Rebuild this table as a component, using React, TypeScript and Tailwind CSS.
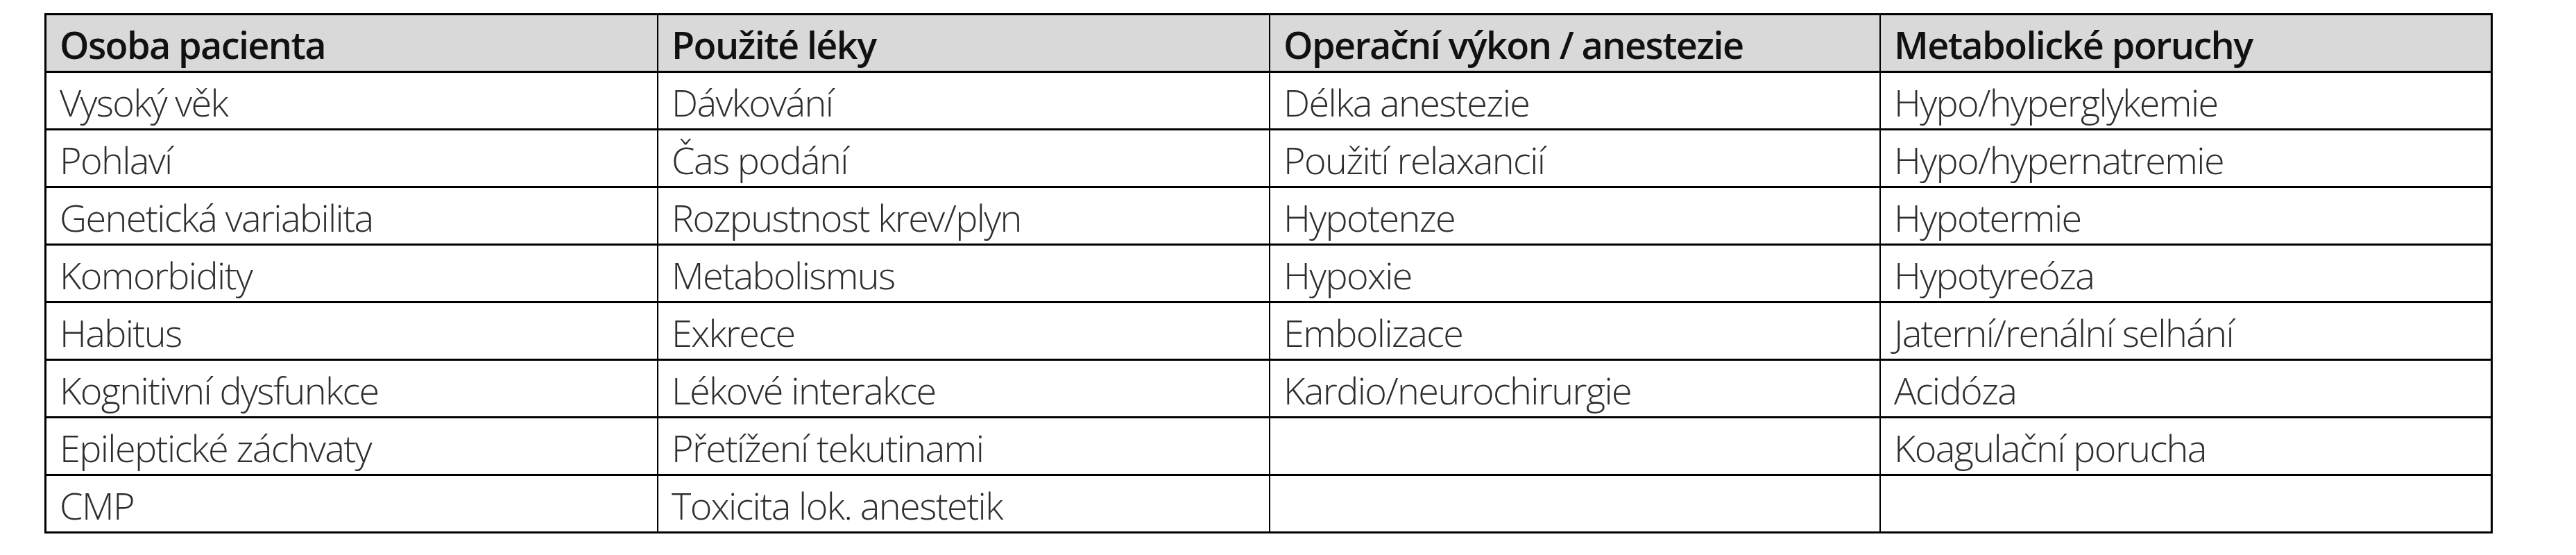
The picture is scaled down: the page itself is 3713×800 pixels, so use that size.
import React from "react";

const header = ["Osoba pacienta", "Použité léky", "Operační výkon / anestezie", "Metabolické poruchy"];

const rows: string[][] = [
  ["Vysoký věk", "Dávkování", "Délka anestezie", "Hypo/hyperglykemie"],
  ["Pohlaví", "Čas podání", "Použití relaxancií", "Hypo/hypernatremie"],
  ["Genetická variabilita", "Rozpustnost krev/plyn", "Hypotenze", "Hypotermie"],
  ["Komorbidity", "Metabolismus", "Hypoxie", "Hypotyreóza"],
  ["Habitus", "Exkrece", "Embolizace", "Jaterní/renální selhání"],
  ["Kognitivní dysfunkce", "Lékové interakce", "Kardio/neurochirurgie", "Acidóza"],
  ["Epileptické záchvaty", "Přetížení tekutinami", "", "Koagulační porucha"],
  ["CMP", "Toxicita lok. anestetik", "", ""],
];

const font = { fontFamily: '"Open Sans", "Noto Sans", sans-serif' };

export default function App() {
  return (
    <div className="w-[3713px] h-[800px] bg-white overflow-hidden" style={font}>
      <div className="ml-[64px] mt-[19px] w-[3529px] border-[3px] border-black">
        <div className="grid grid-cols-[880px_882px_880px_881px] h-[80px] bg-[#d9d9d9]">
          {header.map((h, i) => (
            <div
              key={i}
              className={`flex items-center pl-[19px] pt-[2px] text-[54px] font-semibold tracking-[-0.03em] text-[#111111] ${i > 0 ? "border-l-[2px] border-black" : ""}`}
            >
              {h}
            </div>
          ))}
        </div>
        {rows.map((r, ri) => (
          <div key={ri} className="grid grid-cols-[880px_882px_880px_881px] h-[83px] border-t-[3px] border-black">
            {r.map((c, i) => (
              <div
                key={i}
                className={`flex items-center pl-[19px] pt-[2px] text-[54px] font-light tracking-[-0.03em] text-[#2e2e2e] ${i > 0 ? "border-l-[2px] border-black" : ""}`}
              >
                {c}
              </div>
            ))}
          </div>
        ))}
      </div>
    </div>
  );
}
